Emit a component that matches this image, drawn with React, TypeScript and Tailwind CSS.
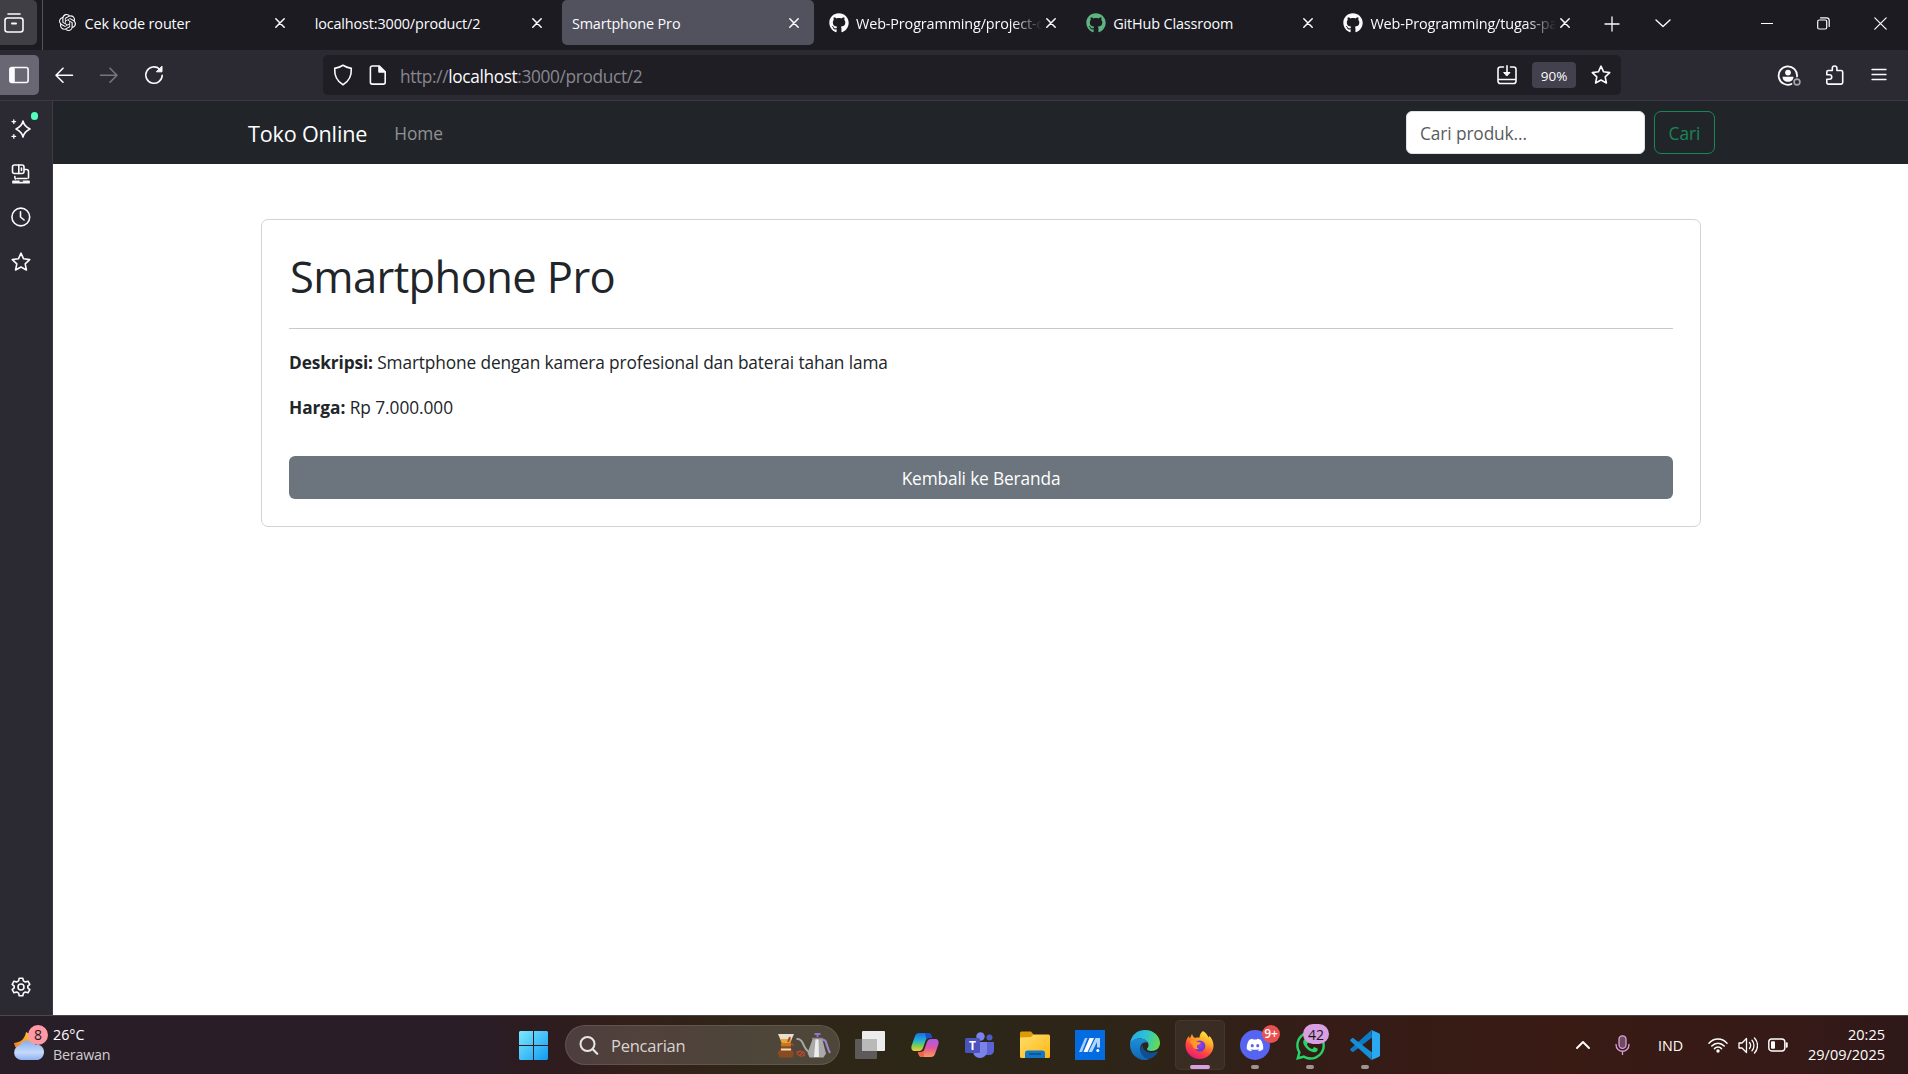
import type { ReactNode } from "react";
import { FaGithub, FaWhatsapp, FaDiscord } from "react-icons/fa";
import { SiOpenai } from "react-icons/si";

type IcoProps = { children: ReactNode; className?: string; box?: string };

function Ico({ children, className = "size-5", box = "0 0 20 20" }: IcoProps) {
  return (
    <svg className={className} viewBox={box} fill="none" stroke="currentColor" strokeWidth="1.6" strokeLinecap="round" strokeLinejoin="round">
      {children}
    </svg>
  );
}

const star = "M10 1.2l2.6 5.6 6.1.8-4.5 4.2 1.2 6.2-5.4-3-5.4 3 1.2-6.2L1.3 7.6l6.1-.8z";

function CloseX() {
  return (
    <Ico className="size-[10px] shrink-0" box="0 0 10 10">
      <path d="M.8.8l8.4 8.4M9.2.8L.8 9.2" strokeWidth="1.5" />
    </Ico>
  );
}

type TabProps = { title: string; icon?: ReactNode; active?: boolean; fade?: boolean };

function Tab({ title, icon, active, fade }: TabProps) {
  return (
    <div className={`mr-[5.2px] flex h-[45px] w-[252px] shrink-0 items-center pl-[9.5px] pr-[15.5px] ${active ? "rounded-[5px] bg-[#52525e]" : ""}`}>
      {icon && <span className="mr-[7px] flex w-5 shrink-0 justify-center">{icon}</span>}
      <span className={`mt-[2px] min-w-0 flex-1 overflow-hidden whitespace-nowrap text-[14.4px] tracking-[-0.13px] ${fade ? "[mask-image:linear-gradient(to_right,black_82%,transparent_98%)]" : ""}`}>
        {title}
      </span>
      <CloseX />
    </div>
  );
}

function TabStrip() {
  return (
    <header className="flex h-[50px] shrink-0 bg-[#1c1b22] text-[#fbfbfe]">
      <div className="flex h-[45px] w-[37px] items-center rounded-r-[5px] bg-[#403f45] pl-1">
        <Ico>
          <path d="M4 1h12" />
          <rect x="1" y="5" width="18" height="14" rx="2.5" />
          <path d="M8 10.5h4" strokeWidth="2" />
        </Ico>
      </div>
      <div className="ml-[5px] mr-[5px] h-[50px] w-px bg-[#55545c]" />
      <Tab title="Cek kode router" icon={<SiOpenai className="size-[17px]" />} />
      <Tab title="localhost:3000/product/2" />
      <Tab title="Smartphone Pro" active />
      <Tab title="Web-Programming/project-c" icon={<FaGithub className="size-5" />} fade />
      <Tab title="GitHub Classroom" icon={<FaGithub className="size-5 text-[#5fb381]" />} />
      <Tab title="Web-Programming/tugas-pa" icon={<FaGithub className="size-5" />} fade />
      <div className="flex h-[47px] w-[42px] items-center justify-center">
        <Ico className="size-4" box="0 0 16 16"><path d="M8 1v14M1 8h14" strokeWidth="1.3" /></Ico>
      </div>
      <div className="flex h-[45px] w-[60px] items-center justify-center">
        <Ico className="size-4" box="0 0 16 16"><path d="M1 5l7 6.5L15 5" strokeWidth="1.4" /></Ico>
      </div>
      <div className="-mr-px ml-auto flex h-[46px]">
        <div className="flex w-[57px] items-center justify-center"><div className="h-px w-3 bg-white" /></div>
        <div className="flex w-[57px] items-center justify-center">
          <Ico className="size-[13px]" box="0 0 13 13">
            <rect x=".7" y="3" width="9" height="9" rx="1.5" strokeWidth="1.2" />
            <path d="M3.5.8h6a2.700 2.700 0 0 1 2.700 2.700v6" strokeWidth="1.2" />
          </Ico>
        </div>
        <div className="flex w-[57px] items-center justify-center">
          <Ico className="size-[13px]" box="0 0 13 13"><path d="M.8.8l11.4 11.4M12.2.8L.8 12.2" strokeWidth="1.2" /></Ico>
        </div>
      </div>
    </header>
  );
}

function Toolbar() {
  return (
    <div className="flex h-[51px] shrink-0 border-b border-[#3b3a42] bg-[#2b2a33] py-[5px] pr-[6px] text-[#fbfbfe]">
      <div className="flex w-[39px] items-center rounded-r-[5px] bg-[#686773] pl-[9px]">
        <Ico>
          <rect x=".9" y="2.5" width="18.2" height="15" rx="2" />
          <path d="M1.500 3.500h3.500v13H1.500z" fill="currentColor" />
        </Ico>
      </div>
      <div className="flex w-[50px] items-center justify-center">
        <Ico><path d="M18.5 10.2H2M9 3.200l-7 7 7 7" /></Ico>
      </div>
      <div className="flex w-10 items-center justify-center text-[#77767e]">
        <Ico><path d="M1.5 10.2H18M11 3.200l7 7-7 7" /></Ico>
      </div>
      <div className="flex w-[50px] items-center justify-center">
        <Ico>
          <path d="M18.2 10.2A8.200 8.200 0 1 1 15.500 4" />
          <path d="M18 1.500v5.300h-5.300z" fill="currentColor" strokeWidth="1" />
        </Ico>
      </div>
      <div className="ml-[144px] flex w-[1298px] items-center rounded-[5px] bg-[#1f1e25]">
        <div className="flex w-10 items-center justify-center">
          <Ico className="h-[22px] w-5" box="0 0 20 22">
            <path d="M10 1.200c2.600 1.600 5.300 2.500 8.300 3.200.3 6-1.400 12.400-8.300 16.400C3.100 16.800 1.400 10.400 1.700 4.400 4.700 3.700 7.400 2.800 10 1.200z" />
          </Ico>
        </div>
        <div className="flex w-[30px] items-center justify-center">
          <Ico>
            <path d="M4.300 1h7l5.900 5.900v10.300a1.900 1.900 0 0 1-1.900 1.900H4.300a1.900 1.900 0 0 1-1.900-1.900V2.900A1.900 1.900 0 0 1 4.300 1z" />
            <path d="M11 1.500V7h5.800z" fill="currentColor" />
          </Ico>
        </div>
        <div className="flex-1 whitespace-nowrap pl-[7px] pt-[3px] text-[17.300px] tracking-[-0.36px] text-[#88878f]">
          http://<span className="text-[#fbfbfe]">localhost</span>:3000/product/2
        </div>
        <div className="mr-[5px] flex w-10 items-center justify-center">
          <Ico>
            <path d="M6.500 2H3.200A2.200 2.200 0 0 0 1 4.200v12.100a2.200 2.200 0 0 0 2.200 2.200h13.600a2.200 2.200 0 0 0 2.200-2.200V4.200A2.200 2.200 0 0 0 16.800 2h-3.300M1 14.500h18M10 .8v7" />
            <path d="M7 7.500h6l-3 3.300z" fill="currentColor" strokeWidth="1" />
          </Ico>
        </div>
        <div className="mr-[5px] flex h-[26px] w-11 items-center justify-center rounded-[4px] bg-[#42414d] pt-[2px] text-[13.5px]">
          90%
        </div>
        <div className="flex w-10 items-center justify-center">
          <Ico><path d={star} /></Ico>
        </div>
      </div>
      <div className="ml-auto flex w-[46px] items-center justify-center">
        <Ico className="h-[21px] w-6" box="0 0 24 21">
          <path d="M20 11.500A9.200 9.200 0 1 0 14.500 19" strokeWidth="1.800" />
          <circle cx="11" cy="7.600" r="2.900" fill="currentColor" stroke="none" />
          <path d="M5.500 11.700h11c0 3-2.300 5-5.500 5s-5.500-2-5.500-5z" fill="currentColor" stroke="none" />
          <circle cx="20" cy="17" r="2.900" stroke="#a5a4ab" />
        </Ico>
      </div>
      <div className="flex w-11 items-center justify-center">
        <Ico className="ml-px size-5">
          <path d="M1.800 9V7a1.500 1.500 0 0 1 1.500-1.500h4V3.300a2.300 2.300 0 0 1 4.600 0v2.200h4.200A1.600 1.600 0 0 1 17.700 7v10.500a1.600 1.600 0 0 1-1.600 1.600H3.300a1.500 1.500 0 0 1-1.500-1.600v-3.200h2.700a2.200 2.200 0 0 0 0-4.500H1.800z" />
        </Ico>
      </div>
      <div className="flex w-[46px] items-center justify-center">
        <Ico className="size-4" box="0 0 16 16"><path d="M1 2.500h14M1 7.500h14M1 12.500h14" strokeWidth="1.300" /></Ico>
      </div>
    </div>
  );
}

function Sidebar() {
  return (
    <aside className="flex w-[53px] shrink-0 flex-col border-r border-[#3b3a42] bg-[#2b2a33] py-[6px] text-[#fbfbfe]">
      <div className="relative flex h-11 w-[42px] items-center justify-center">
        <Ico>
          <path d="M12 2c.8 4 2.400 5.700 7 8-4.600 2.300-6.200 4-7 8-.8-4-2.400-5.700-7-8 4.600-2.300 6.200-4 7-8z" />
          <path d="M2.800.800v3.600M1 2.600h3.600M2.800 15.600v3.600M1 17.400h3.600" strokeWidth="1.300" />
        </Ico>
        <span className="absolute left-[31px] top-[5px] h-2 w-[7px] rounded-full bg-[#54ffbd]" />
      </div>
      <div className="flex h-11 w-[42px] items-center justify-center">
        <Ico className="mt-px size-5">
          <rect x="1.500" y="1" width="11.500" height="8.500" rx="2" />
          <path d="M7.800 1v8.500M10.500 4v2.500M13.500 5.500h2c1.200 0 2 .8 2 2v6.500M3.800 12.500c0 1 .2 1.800.7 2.500M6 14.500h10" />
          <path d="M1.800 17h16.400v2H1.800z" fill="currentColor" strokeWidth="1.200" />
          <path d="M9 17h2.500" stroke="#2b2a33" strokeWidth="1.400" />
        </Ico>
      </div>
      <div className="flex h-11 w-[42px] items-center justify-center">
        <Ico><circle cx="9.800" cy="10" r="8.900" /><path d="M9.500 4.800V10l3.600 3" /></Ico>
      </div>
      <div className="flex h-11 w-[42px] items-center justify-center">
        <Ico className="mt-px size-5"><path d={star} /></Ico>
      </div>
      <div className="mt-auto flex h-11 w-[42px] items-center justify-center">
        <Ico>
          <circle cx="10" cy="10" r="3" />
          <path d="M8.200 1.200h3.600l.6 2.700 1.900 1.100 2.700-.8 1.800 3.100-2 1.900v1.600l2 1.900-1.800 3.100-2.700-.8-1.900 1.100-.6 2.700H8.200l-.6-2.700L5.700 15l-2.700.8-1.800-3.100 2-1.900V9.200l-2-1.900L3 4.200l2.700.8 1.900-1.100z" />
        </Ico>
      </div>
    </aside>
  );
}

function StorePage() {
  return (
    <main className="flex min-w-0 flex-1 flex-col bg-white text-[17.300px] text-[#212529]">
      <nav className="flex h-[63px] shrink-0 items-center bg-[#212529] pl-[195px] pr-[193px]">
        <span className="mt-[3px] whitespace-nowrap text-[21.600px] tracking-[-0.18px] text-white">Toko Online</span>
        <span className="ml-[27px] mt-[2px] text-[#909294]">Home</span>
        <div className="ml-auto flex h-[43px] w-[239px] items-center rounded-[6px] border border-[#dee2e6] bg-white pl-[13px] pt-[2px] tracking-[-0.1px] text-[#595c5f]">
          Cari produk...
        </div>
        <button className="ml-[9px] flex h-[43px] w-[61px] items-center justify-center rounded-[7px] border border-[#198754] pt-[2px] text-[#198754]">
          Cari
        </button>
      </nav>
      <section className="ml-[208px] mt-[55px] flex h-[308px] w-[1440px] flex-col rounded-[7px] border border-[#d3d3d4] px-[27px]">
        <h1 className="mt-[30px] h-[54px] whitespace-nowrap pl-px text-[43.500px] leading-[54px] tracking-[-0.6px]">Smartphone Pro</h1>
        <hr className="mt-[24px] border-[#c8c9ca]" />
        <p className="mt-[20px] h-[27px] whitespace-nowrap leading-[27px] tracking-[-0.13px]">
          <b>Deskripsi:</b> Smartphone dengan kamera profesional dan baterai tahan lama
        </p>
        <p className="mt-[18px] h-[27px] whitespace-nowrap leading-[27px] tracking-[-0.06px]">
          <b>Harga:</b> Rp 7.000.000
        </p>
        <button className="mt-[35px] flex h-[43px] items-center justify-center rounded-[6px] bg-[#6c757d] pt-[2px] tracking-[-0.14px] text-white">
          Kembali ke Beranda
        </button>
      </section>
    </main>
  );
}

function WeatherIcon() {
  return (
    <svg className="h-[30px] w-8" viewBox="0 0 32 30">
      <defs>
        <linearGradient id="moon" x1="0" y1="1" x2="1" y2="0"><stop offset="0" stopColor="#f2721c" /><stop offset="1" stopColor="#ffd23e" /></linearGradient>
        <linearGradient id="cloud" x1="0" y1="0" x2="0" y2="1"><stop offset="0" stopColor="#86aef0" /><stop offset=".6" stopColor="#c5d9fa" /><stop offset="1" stopColor="#8eb2f1" /></linearGradient>
      </defs>
      <path d="M13 1c-1 6-4 10-12 11 1 5 4 8 9 9h10l4-14z" fill="url(#moon)" />
      <path d="M8 29a7.500 7.500 0 0 1-1-14.800C8 10 14 8.500 18 11c2 0 3 1 4 3 6-1 9 3 9 7s-3 8-7 8z" fill="url(#cloud)" />
    </svg>
  );
}

function CoffeeArt() {
  return (
    <svg className="h-[25px] w-[54px]" viewBox="0 0 54 25">
      <path d="M1 1h16l-4 9H5z" fill="#e9dfd0" />
      <path d="M3 6h12l-2 4H5z" fill="#e9a53a" />
      <path d="M4 10h10v3.500H4z" fill="#c9751c" />
      <path d="M11 9l2-5M14 11l3 1" stroke="#a2452c" strokeWidth="2" />
      <path d="M4.500 14h9l3.500 6-1.500 4.500h-13L0.500 20z" fill="#8a4a22" />
      <path d="M4 16.500h10" stroke="#f1dcb4" strokeWidth="2" />
      <path d="M19.500 6c8-1 6 11 13 13" fill="none" stroke="#a9a9a9" strokeWidth="2" />
      <path d="M36 5h9l4 15.500-2.500 4H32.500L30.500 20z" fill="#a9a9aa" />
      <path d="M38.500 6h3l.5 18h-5z" fill="#ececec" />
      <path d="M35 5.500h11" stroke="#8a8a8b" strokeWidth="1.500" />
      <path d="M37.500 1h6M40.500 1v3" stroke="#8f76c8" strokeWidth="1.800" />
      <path d="M45 7c5-1.500 4 6 8 13" fill="none" stroke="#9b86c9" strokeWidth="2.200" />
      <path d="M19 19l4-2 5 2v4l-4 1-4-2z" fill="#a34a33" />
      <path d="M21 21l3-1.500M24.500 22.500l2-2" stroke="#6f2a1c" strokeWidth="1" />
    </svg>
  );
}

function TaskIcon({ children, active, running }: { children: ReactNode; active?: boolean; running?: boolean }) {
  return (
    <div className={`relative mr-[5px] flex h-[50px] w-[50px] shrink-0 items-center justify-center rounded-[5px] border ${active ? "border-white/5 bg-white/5" : "border-transparent"}`}>
      {children}
      {active && <span className="absolute bottom-0 h-1 w-5 rounded-full bg-[#d99fe3]" />}
      {running && <span className="absolute bottom-0 h-1 w-2 rounded-full bg-[#a1938f]" />}
    </div>
  );
}

function Copilot() {
  return (
    <svg className="h-[26px] w-7" viewBox="0 0 28 26">
      <defs>
        <linearGradient id="cpA" x1="0" y1="0" x2="0" y2="1"><stop offset="0" stopColor="#1c6bea" /><stop offset=".45" stopColor="#22b6cf" /><stop offset=".7" stopColor="#79cc55" /><stop offset="1" stopColor="#f3d02f" /></linearGradient>
        <linearGradient id="cpB" x1="0" y1="0" x2="0" y2="1"><stop offset="0" stopColor="#a45cf0" /><stop offset=".5" stopColor="#e4559f" /><stop offset="1" stopColor="#fb9a55" /></linearGradient>
      </defs>
      <path d="M8 1h9c2 0 3 1 3.500 3L21 6h-3c-2 0-3 1-3.500 3L12 16c-.7 2-2 3-4 3H4c-3 0-4-2-3.500-5L4 4c.7-2 2-3 4-3z" fill="url(#cpA)" />
      <path d="M20 25h-9c-2 0-3-1-3.500-3L7 20h3c2 0 3-1 3.500-3L16 10c.7-2 2-3 4-3h4c3 0 4 2 3.500 5L24 22c-.7 2-2 3-4 3z" fill="url(#cpB)" />
      <path d="M14 1h3c2 0 3 1 3.500 3L21 6h-3c-1 0-2 .4-2.700 1.200z" fill="#1d4fc4" />
      <path d="M7 20h3c1 0 2-.4 2.700-1.200L13 25h-2c-2 0-3-1-3.500-3z" fill="#f2634a" />
    </svg>
  );
}

function Teams() {
  return (
    <svg className="-ml-px h-[26px] w-[29px]" viewBox="0 0 29 26">
      <circle cx="24.500" cy="5.500" r="3" fill="#5059c9" />
      <circle cx="15.500" cy="4.500" r="4.200" fill="#7b83eb" />
      <path d="M20 10h9v8c0 3-2 5-5 5h-4z" fill="#5b63d3" />
      <path d="M8 10h14v9c0 4-3 7-7 7s-7-3-7-7z" fill="#7b83eb" />
      <rect x="0" y="6" width="15" height="15" rx="1.500" fill="#4b53bc" />
      <text x="7.500" y="18" textAnchor="middle" fontSize="12" fontWeight="700" fontFamily="Open Sans" fill="#fff">T</text>
    </svg>
  );
}

function Explorer() {
  return (
    <svg className="h-7 w-[30px]" viewBox="0 0 30 28">
      <defs><linearGradient id="fold" x1="0" y1="0" x2="1" y2="1"><stop offset="0" stopColor="#ffdc6b" /><stop offset="1" stopColor="#fdb913" /></linearGradient></defs>
      <path d="M0 2a1.500 1.500 0 0 1 1.500-1.500H11l3 3.500-2 6H0z" fill="#dd9b07" />
      <path d="M0 6.500l11-.5 2.500-2.500h15A1.500 1.500 0 0 1 30 5v20.500a1.500 1.500 0 0 1-1.500 1.500h-27A1.500 1.500 0 0 1 0 25.500z" fill="url(#fold)" />
      <path d="M5 27v-5a2.500 2.500 0 0 1 2.500-2.500h15A2.500 2.500 0 0 1 25 22v5z" fill="#1377c6" />
      <path d="M9 23h12" stroke="#0a4a83" strokeWidth="1.400" />
    </svg>
  );
}

function MyAsus() {
  return (
    <svg className="size-[30px]" viewBox="0 0 30 30">
      <rect width="30" height="30" fill="#056be0" />
      <path d="M4 22l6-14h2.500L7 22z" fill="#a9cffb" />
      <path d="M8.500 22l6-14H19l-6.500 14z" fill="#fff" />
      <path d="M13.500 22l7-14H25v9.500h-3V12l-5 10z" fill="#b4d5fc" />
      <circle cx="22.800" cy="20.600" r="1.500" fill="#fff" />
    </svg>
  );
}

function Edge() {
  return (
    <svg className="size-[30px]" viewBox="0 0 30 30">
      <defs>
        <linearGradient id="edA" x1="0" y1=".3" x2="1" y2=".5"><stop offset="0" stopColor="#2aa7e8" /><stop offset=".5" stopColor="#2cc3d2" /><stop offset="1" stopColor="#67dc4f" /></linearGradient>
        <linearGradient id="edB" x1="0" y1="0" x2="0" y2="1"><stop offset="0" stopColor="#1b8fd9" /><stop offset="1" stopColor="#1266b4" /></linearGradient>
      </defs>
      <path d="M0 14C1 5 7 0 15 0c9 0 15 6.500 15 13 0 5-4 8-8.500 8-3.500 0-5-1.200-4.500-2.200 1-1.200 1.500-2.300 1.500-3.800C18.500 11 14 8.500 9.500 8.500 5 8.500 1.500 11 0 14z" fill="url(#edA)" />
      <path d="M0 14.500C1 10.500 5 8.500 9.500 8.500c4 0 7 1.500 8.300 4C12 11 9.500 16 10.500 20.500c.9 4 4 8 9.500 8.300-1.500.8-3.200 1.200-5 1.200C6 30 0 23 0 14.500z" fill="url(#edB)" />
      <path d="M12.500 15c-1 1.500-2 3-2 5.500 0 4 4 8.500 9.500 8.300 3.500-1.200 6-3.500 7.600-6.300.4-.7-.2-1.200-.9-.9C22 24 13 23 12.500 15z" fill="#104f93" />
    </svg>
  );
}

function Firefox() {
  return (
    <svg className="-ml-px h-7 w-[29px]" viewBox="0 0 29 28">
      <defs>
        <linearGradient id="ffA" x1=".8" y1="0" x2=".3" y2="1"><stop offset="0" stopColor="#fff04a" /><stop offset=".35" stopColor="#ffab25" /><stop offset=".65" stopColor="#ff4b3c" /><stop offset="1" stopColor="#e6157f" /></linearGradient>
        <radialGradient id="ffB" cx=".5" cy=".4" r=".6"><stop offset="0" stopColor="#a03df0" /><stop offset="1" stopColor="#5a3bd0" /></radialGradient>
      </defs>
      <path d="M18 0c4 2.500 4.500 5 6 6.500 0-.8.200-1 .5-1.500C27 7.500 28.500 11 28.500 14.500 28.500 22 22 28 14.500 28S.5 22 .5 14.500C.5 10 2 7 4 5c0 1 .3 1.800.8 2.500L7 3c.5 2 1.500 3 3 4 1.500-.5 3-.5 4.500-.3C14.500 3.500 16 1.500 18 0z" fill="url(#ffA)" />
      <circle cx="14.800" cy="15" r="5.500" fill="url(#ffB)" />
      <path d="M5 10.500c3-2 5-1 7 .3 1.500.7 3 .2 3.800.7-.5 2-3.200 2-3.800 3-.5 1.500.5 3 2 3.500-3.500 1-6-.8-6.500-3.500z" fill="#ff9a26" />
    </svg>
  );
}

function VsCode() {
  return (
    <svg className="size-[30px]" viewBox="0 0 30 30">
      <path d="M22 7.500L3.500 21.700c-.5.400-1.100.300-1.500 0l-1.400-1.300c-.6-.5-.6-1.200 0-1.700L21.500 0z" fill="#0b7cc4" />
      <path d="M22 22.500L3.500 8.300c-.5-.4-1.100-.3-1.500 0L.6 9.600c-.6.5-.6 1.200 0 1.700L21.500 30z" fill="#1490d8" />
      <path d="M21.500 0L28.500 3c1 .5 1.500 1 1.500 2v20c0 1-.5 1.500-1.500 2l-7 3c-.8.300-1.300 0-1.800-.4.900.8 2.300.3 2.300-1.200V1.600c0-1.500-1.400-2-2.300-1.200.5-.4 1-.7 1.800-.4z" fill="#2aa8f2" />
    </svg>
  );
}

function Taskbar() {
  return (
    <footer className="flex h-[59px] shrink-0 items-center border-t border-[#4c4644] bg-[linear-gradient(90deg,#281e28_0%,#291d27_24%,#2e1c1f_29%,#33201a_33%,#2f2617_40%,#2c2718_50%,#2e2418_60%,#351c16_70%,#391b14_82%,#361a17_93%,#2f1819_100%)] text-[14.300px] text-white">
      <div className="flex w-[503px] shrink-0 items-center">
        <div className="relative ml-[13px] mt-[1px] w-8">
          <WeatherIcon />
          <span className="absolute -top-[6px] left-[15px] flex size-5 items-center justify-center rounded-full bg-[#ff99a4] text-[14px] text-[#1c1c1c]">8</span>
        </div>
        <div className="ml-[8px] flex flex-col leading-5">
          <span>26°C</span>
          <span className="tracking-[-0.22px] text-[#cfcccd]">Berawan</span>
        </div>
      </div>
      <div className="mr-[2px] flex w-[60px] shrink-0 items-center justify-center">
        <svg className="size-[29px]" viewBox="0 0 29 29">
          <defs><linearGradient id="win" x1="0" y1="0" x2="1" y2="1"><stop offset="0" stopColor="#7ceafc" /><stop offset="1" stopColor="#119af4" /></linearGradient></defs>
          <path d="M1 0h13v14H0V1zM15 0h13l1 1v13H15zM0 15h14v14H1l-1-1zM15 15h14v13l-1 1H15z" fill="url(#win)" />
        </svg>
      </div>
      <div className="flex h-10 w-[275px] shrink-0 items-center rounded-full border border-white/10 bg-white/15 pl-[13px] pr-[8px]">
        <Ico className="h-[19px] w-5" box="0 0 20 19"><circle cx="8.500" cy="8" r="7" stroke="#e8e6e5" strokeWidth="2" /><path d="M13.800 13.300l4.400 4.400" stroke="#e8e6e5" strokeWidth="2.200" /></Ico>
        <span className="ml-[12px] mt-[2px] flex-1 text-[16.500px] tracking-[-0.25px] text-[#d8d4d1]">Pencarian</span>
        <CoffeeArt />
      </div>
      <div className="ml-[5px] flex">
        <TaskIcon>
          <svg className="h-7 w-[30px]" viewBox="0 0 30 28">
            <rect x="0" y="8" width="22" height="20" rx="1" fill="#5c5b5a" />
            <rect x="7" y="0" width="23" height="20" rx="1" fill="#ececec" />
            <path d="M7 8h15v12H7z" fill="#b9b9b9" />
          </svg>
        </TaskIcon>
        <TaskIcon><Copilot /></TaskIcon>
        <TaskIcon><Teams /></TaskIcon>
        <TaskIcon><Explorer /></TaskIcon>
        <TaskIcon><MyAsus /></TaskIcon>
        <TaskIcon><Edge /></TaskIcon>
        <TaskIcon active><Firefox /></TaskIcon>
        <TaskIcon running>
          <span className="flex size-[30px] items-center justify-center rounded-full bg-[#5764f1]"><FaDiscord className="size-[18px] text-white" /></span>
          <span className="absolute left-[31px] top-[4px] flex size-[18px] items-center justify-center rounded-full bg-[#e9504f] text-[12px] font-semibold">9+</span>
        </TaskIcon>
        <TaskIcon running>
          <FaWhatsapp className="size-[33px] text-[#25d366]" />
          <span className="absolute left-[17px] top-[3px] flex h-5 w-[26px] items-center justify-center rounded-full bg-[#d99fe3] text-[14px] text-[#191919]">42</span>
        </TaskIcon>
        <TaskIcon running><VsCode /></TaskIcon>
      </div>
      <div className="ml-auto flex items-center pr-[23px]">
        <Ico className="mr-[25px] size-[14px]" box="0 0 14 14"><path d="M1 10l6-6 6 6" strokeWidth="1.900" /></Ico>
        <svg className="mr-[28px] h-5 w-[15px]" viewBox="0 0 15 20" fill="none" stroke="#d9a0e0" strokeWidth="1.300" strokeLinecap="round">
          <rect x="4" y=".8" width="7" height="12.500" rx="3.500" fill="#6d4a60" />
          <path d="M1 9.500c0 9 13 9 13 0M7.500 16.500v3" />
        </svg>
        <span className="mr-[25px] mt-px">IND</span>
        <Ico className="mr-[10px] h-[15px] w-5" box="0 0 20 15">
          <path d="M1 5.200c5-5.500 13-5.500 18 0M3.800 8c3.500-3.700 8.900-3.700 12.400 0M6.500 10.600c2-2 5-2 7 0" strokeWidth="1.500" />
          <circle cx="10" cy="13" r="1.700" fill="currentColor" stroke="none" />
        </Ico>
        <Ico className="mr-[10px] h-[17px] w-5" box="0 0 20 17">
          <path d="M1 6h3l4.500-4.500v14L4 11H1zM11.500 5.500c1.300 1.700 1.300 4.300 0 6M14 3.300c2.600 2.800 2.600 7.600 0 10.400M16.500 1c4 4 4 11 0 15" strokeWidth="1.300" />
        </Ico>
        <Ico className="mr-[20px] h-[14px] w-5" box="0 0 20 14">
          <rect x=".8" y="1" width="16" height="12" rx="3" strokeWidth="1.400" />
          <rect x="3" y="3.300" width="4" height="7.400" rx="1" fill="currentColor" stroke="none" />
          <path d="M18.700 5.300v3.400" strokeWidth="2" />
        </Ico>
        <div className="flex flex-col items-end text-[14.500px] leading-5">
          <span>20:25</span>
          <span>29/09/2025</span>
        </div>
      </div>
    </footer>
  );
}

export default function App() {
  return (
    <div className="flex h-[1074px] w-[1908px] flex-col overflow-hidden font-['Open_Sans',sans-serif]">
      <TabStrip />
      <Toolbar />
      <div className="flex min-h-0 flex-1">
        <Sidebar />
        <StorePage />
      </div>
      <Taskbar />
    </div>
  );
}
